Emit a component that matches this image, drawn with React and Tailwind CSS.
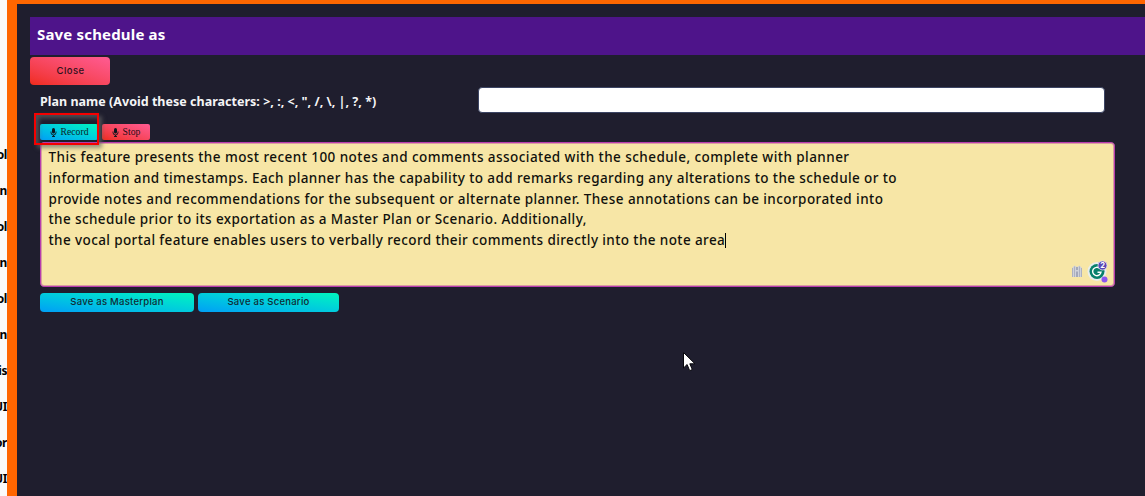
import React from "react";

const sideLabels = ["ol", "an", "ol", "an", "ol", "an", "is", "UI", "or", "UI"];

const noteLines = [
  { text: "This feature presents the most recent 100 notes and comments associated with the schedule, complete with planner", spacing: "tracking-[0.445px]" },
  { text: "information and timestamps. Each planner has the capability to add remarks regarding any alterations to the schedule or to", spacing: "tracking-[0.405px]" },
  { text: "provide notes and recommendations for the subsequent or alternate planner. These annotations can be incorporated into", spacing: "tracking-[0.425px]" },
  { text: "the schedule prior to its exportation as a Master Plan or Scenario. Additionally,", spacing: "tracking-[0.4px]" },
  { text: "the vocal portal feature enables users to verbally record their comments directly into the note area", spacing: "tracking-[0.395px]", caret: true },
];

function Mic() {
  return (
    <svg width="7" height="9" viewBox="0 0 12 18" className="shrink-0">
      <rect x="3" y="0" width="6" height="11" rx="3" fill="#0c161e" />
      <path d="M1 7v2a5 5 0 0 0 10 0V7M6 14v3M3 17h6" fill="none" stroke="#0c161e" strokeWidth="1.8" />
    </svg>
  );
}

function Assistant() {
  return (
    <svg width="40" height="26" viewBox="0 0 40 26">
      <path d="M3 9l2.500-2.500 2.500 1.500 2.500-1.500L13 9v9H3z" fill="#d0d2da" />
      <path d="M3.500 9v9M5.500 7.500v10.500M10.500 7.500v10.500M12.500 9v9" stroke="#a3a8b9" strokeWidth="0.8" />
      <path d="M7.500 8h1v3h-1zM7.500 12.500h1v5.500h-1z" fill="#777e99" />
      <circle cx="28" cy="12.500" r="9.500" fill="#e9edeb" />
      <circle cx="28" cy="12.500" r="7.500" fill="#07806c" />
      <path d="M30.800 9.500a4.200 4.200 0 1 0 1.200 3.700H28.500" fill="none" stroke="#fff" strokeWidth="1.400" />
      <circle cx="33.500" cy="6.500" r="4.500" fill="#5947b5" stroke="#e4e0ef" strokeWidth="0.8" />
      <text x="33.500" y="9.200" textAnchor="middle" fontSize="7.500" fontWeight="700" fontFamily="Inter, sans-serif" fill="#fff">2</text>
      <circle cx="35.500" cy="20.500" r="3" fill="#8a55f0" />
    </svg>
  );
}

export default function App() {
  return (
    <div className="relative flex h-[496px] w-full overflow-hidden bg-[#fafafa]">
      <aside className="flex w-[7px] shrink-0 flex-col items-end overflow-hidden pt-[137px] font-['Noto_Sans',sans-serif] text-[12px] font-bold text-black">
        {sideLabels.map((label, i) => (
          <div key={i} className="h-9 shrink-0 leading-9 tracking-[-0.4px] whitespace-nowrap">{label}</div>
        ))}
      </aside>
      <main className="min-w-0 flex-1 border-t-4 border-l-10 border-[#ff6600] bg-[#1f1e2e] pt-[13px] pl-[13px]">
        <header className="flex h-[38px] items-center bg-[#4e148a] pb-[4px] pl-[7px] font-['Noto_Sans',sans-serif] text-[15px] font-bold text-white">
          <h1 className="tracking-[0.17px] whitespace-nowrap">Save schedule as</h1>
        </header>
        <button className="mt-[2px] flex h-7 w-20 items-center justify-center rounded-[4px] bg-linear-to-tr from-[#f02b18] to-[#ff5b93] pl-px font-['Inter',sans-serif] text-[9.5px] font-medium tracking-[0.4px] text-[#30111c]">
          Close
        </button>
        <div className="mt-[2px] flex h-[26px] pl-[10px]">
          <label className="w-[438px] shrink-0 pt-[6px] font-['Noto_Sans',sans-serif] text-[12.500px] leading-[18px] font-bold tracking-[0.02px] whitespace-nowrap text-[#f4f4f6]">
            {'Plan name (Avoid these characters: >, :, <, ", /, \\, |, ?, *)'}
          </label>
          <div className="h-[26px] w-[627px] rounded-[4px] border border-[#3c4564] bg-white" />
        </div>
        <div className="relative mt-[11px] flex h-4 gap-[4px] pl-[10px]">
          <button className="flex h-4 w-[58px] items-center justify-center gap-1 rounded-[2px] bg-linear-to-tr from-[#009ff5] to-[#00f5bd] pt-px font-['Liberation_Serif',serif] text-[9.700px] text-[#0c1f28]">
            <Mic />Record
          </button>
          <button className="flex h-4 w-12 items-center justify-center gap-1 rounded-[2px] bg-linear-to-tr from-[#f02b18] to-[#ff5b93] pt-px font-['Liberation_Serif',serif] text-[9.700px] text-[#250c15]">
            <Mic />Stop
          </button>
          <div className="absolute -top-[11px] left-[4px] z-10 h-8 w-[65px] border-2 border-[#f50000] shadow-[3px_3px_4px_0px_#666a,inset_3px_3px_4px_0px_#666a]" />
        </div>
        <section className="relative mt-[2px] ml-[10px] h-[145px] w-[1075px] rounded-[4px] border-[1.5px] border-[#b83cae] bg-[#f7e6a6] pt-[4px] pl-[7.500px] font-['Noto_Sans',sans-serif] text-[13.500px] leading-[20.800px] font-medium text-[#11110c] shadow-[inset_0_0_0_1px_#d79fa0]">
          {noteLines.map((line) => (
            <div key={line.text} className="flex items-center whitespace-pre">
              <span className={line.spacing}>{line.text}</span>
              {line.caret && <span className="h-[15px] w-px bg-black" />}
            </div>
          ))}
          <div className="absolute right-[5px] bottom-[1px]">
            <Assistant />
          </div>
        </section>
        <div className="mt-[6px] flex gap-1 pl-[10px] font-['Inter',sans-serif] text-[9.500px] font-medium tracking-[0.25px] text-[#102a35]">
          <button className="h-[19px] w-[154px] rounded-[4px] bg-linear-to-tr from-[#009ff5] to-[#00f5bd]">Save as Masterplan</button>
          <button className="h-[19px] w-[141px] rounded-[4px] bg-linear-to-tr from-[#009ff5] to-[#00f5bd]">Save as Scenario</button>
        </div>
      </main>
      <svg className="absolute top-[352px] left-[683px]" width="13" height="20" viewBox="0 0 13 20">
        <path d="M.5.5v15.500l3.600-3.500 2.600 6.200 2.600-1.200-2.500-5.700h5.200z" fill="#fff" stroke="#07070c" />
      </svg>
    </div>
  );
}
